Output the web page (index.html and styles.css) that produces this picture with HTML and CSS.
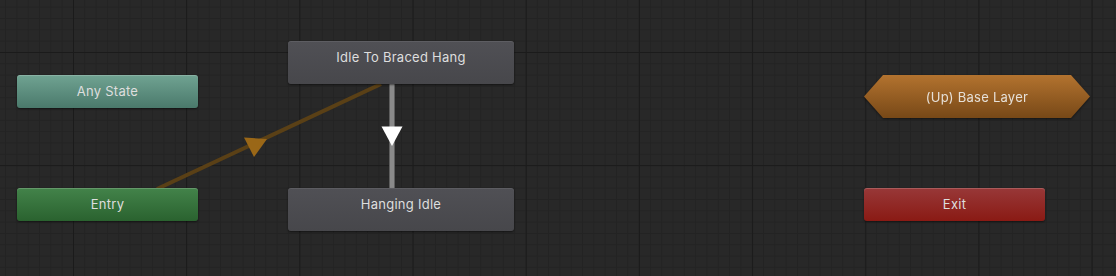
FILE: index.html
```html
<!DOCTYPE html>
<html lang="en">
<head>
  <meta charset="UTF-8">
  <title>Animator</title>
  <link rel="stylesheet" href="styles.css">
</head>
<body>
  <div class="graph">
    <svg class="links" width="1116" height="276" viewBox="0 0 1116 276">
      <!-- Entry -> Idle To Braced Hang -->
      <line x1="157" y1="189" x2="381" y2="84" stroke="#5a4016" stroke-width="4"/>
      <polygon points="244,137.5 267,139 254,157" fill="#9a6717"/>
      <!-- Idle To Braced Hang -> Hanging Idle -->
      <rect x="389" y="84" width="6" height="104" fill="#5e5e5e"/>
      <rect x="390" y="84" width="4" height="104" fill="#8a8a8a"/>
      <polygon points="381.5,126.5 402.5,126.5 392,146" fill="#ffffff"/>
    </svg>

    <div class="node any-state" style="left:17px; top:75px;">Any State</div>
    <div class="node entry" style="left:17px; top:188px;">Entry</div>
    <div class="node state" style="left:288px; top:41px;">Idle To Braced Hang</div>
    <div class="node state" style="left:288px; top:188px;">Hanging Idle</div>
    <div class="layer-wrap" style="left:864px; top:75px;">
      <div class="layer">(Up) Base Layer</div>
    </div>
    <div class="node exit" style="left:864px; top:188px;">Exit</div>
  </div>
</body>
</html>
```

FILE: styles.css
```css
html, body {
  margin: 0;
  padding: 0;
  background-color: #282828;
  font-family: 'Inter', 'Noto Sans', sans-serif;
}

.graph {
  position: relative;
  width: 1116px;
  height: 276px;
  overflow: hidden;
  background-color: #282828;
  background-image:
    linear-gradient(to right, #1b1b1b 0, #1b1b1b 1px, transparent 1px),
    linear-gradient(to bottom, #1b1b1b 0, #1b1b1b 1px, transparent 1px),
    linear-gradient(to right, #232323 0, #232323 1px, transparent 1px),
    linear-gradient(to bottom, #232323 0, #232323 1px, transparent 1px);
  background-size:
    113.2px 113.2px,
    113.2px 113.2px,
    11.32px 11.32px,
    11.32px 11.32px;
  background-position:
    73px 0,
    0 52px,
    5.1px 0,
    0 6.7px;
}

.links {
  position: absolute;
  left: 0;
  top: 0;
}

.node {
  position: absolute;
  width: 181px;
  height: 33px;
  line-height: 33px;
  border-radius: 3px;
  text-align: center;
  font-size: 13px;
  letter-spacing: 0.25px;
  color: #dedede;
  box-shadow: 0 1px 2px rgba(0, 0, 0, 0.5), inset 0 1px 0 rgba(255, 255, 255, 0.18);
}

.any-state {
  background: linear-gradient(to bottom, #70a392, #4a796b);
}

.entry {
  background: linear-gradient(to bottom, #43834a, #2a622f);
}

.exit {
  background: linear-gradient(to bottom, #983838, #8a1a14);
}

.state {
  width: 226px;
  height: 43px;
  line-height: 32px;
  background: linear-gradient(to bottom, #505055, #47474b);
  box-shadow: 0 1px 2px rgba(0, 0, 0, 0.5), inset 0 1px 0 rgba(255, 255, 255, 0.08);
}

.layer-wrap {
  position: absolute;
  filter: drop-shadow(0 1px 1px rgba(0, 0, 0, 0.5));
}

.layer {
  width: 226px;
  height: 43px;
  line-height: 44px;
  text-align: center;
  font-size: 13px;
  letter-spacing: 0.25px;
  color: #e6e0d8;
  background: linear-gradient(to bottom, #b3732f, #774817);
  clip-path: polygon(0 50%, 19px 0, calc(100% - 19px) 0, 100% 50%, calc(100% - 19px) 100%, 19px 100%);
}
```
